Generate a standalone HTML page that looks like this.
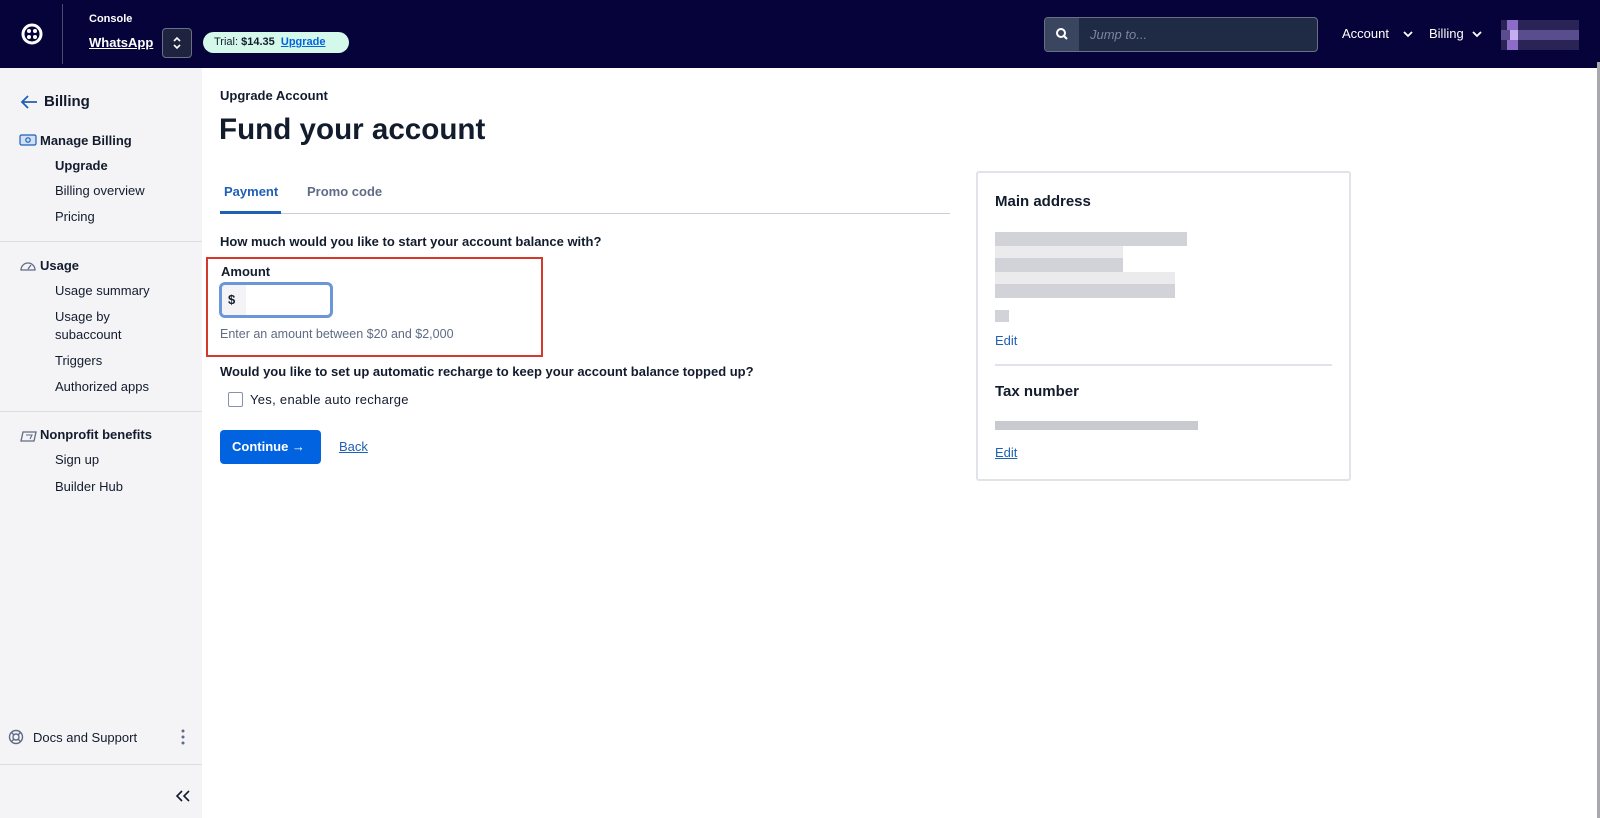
<!DOCTYPE html>
<html><head><meta charset="utf-8"><style>
*{box-sizing:border-box;margin:0;padding:0}
body{width:1600px;height:818px;overflow:hidden;font-family:"Liberation Sans",Arial,sans-serif;background:#fff;position:relative;color:#121c2d}
.hdr{position:absolute;left:0;top:0;width:1600px;height:68px;background:#06033a}
.side{position:absolute;left:0;top:68px;width:202px;height:750px;background:#f4f4f6}
.abs{position:absolute}
.s{font-size:13px;color:#121c2d}
.sb{font-size:13px;font-weight:bold;color:#121c2d}
.hr{position:absolute;left:0;width:202px;height:1px;background:#dcdde2}
.blk{position:absolute;background:#d2d3d8}
</style></head><body>
<div class="hdr">
 <svg class="abs" style="left:21px;top:23px" width="22" height="22" viewBox="0 0 22 22"><circle cx="11" cy="11" r="9" fill="none" stroke="#fff" stroke-width="3"/><circle cx="8" cy="8" r="2" fill="#fff"/><circle cx="14" cy="8" r="2" fill="#fff"/><circle cx="8" cy="14" r="2" fill="#fff"/><circle cx="14" cy="14" r="2" fill="#fff"/></svg>
 <div class="abs" style="left:62px;top:4px;width:1px;height:60px;background:#4b4a6e"></div>
 <div class="abs" style="left:89px;top:13px;color:#fff;font-size:11px;font-weight:bold">Console</div>
 <div class="abs" style="left:89px;top:35px;color:#fff;font-size:13px;font-weight:bold;text-decoration:underline">WhatsApp</div>
 <div class="abs" style="left:162px;top:28px;width:30px;height:30px;border:1px solid #6a6f86;border-radius:4px;background:#1e2440"><svg width="28" height="28" viewBox="0 0 28 28"><path d="M11 12l3-3 3 3M11 16l3 3 3-3" fill="none" stroke="#fff" stroke-width="1.6"/></svg></div>
 <div class="abs" style="left:203px;top:32px;width:146px;height:21px;border-radius:11px;background:#d4f8ea;font-size:11px;line-height:21px;padding-left:11px;color:#121c2d">Trial: <b>$14.35</b> &nbsp;<b style="color:#0263e0;text-decoration:underline">Upgrade</b></div>
 <div class="abs" style="left:1044px;top:17px;width:274px;height:35px;border:1px solid #6a6f86;border-radius:4px;background:#1f2b44"></div>
 <div class="abs" style="left:1045px;top:18px;width:34px;height:33px;background:#3a4560;border-radius:3px 0 0 3px"><svg width="34" height="33" viewBox="0 0 34 33"><circle cx="16" cy="15" r="4" fill="none" stroke="#fff" stroke-width="2"/><path d="M19 18l3 3" stroke="#fff" stroke-width="2"/></svg></div>
 <div class="abs" style="left:1090px;top:27px;font-size:13px;font-style:italic;color:#7b83a0">Jump to...</div>
 <div class="abs" style="left:1342px;top:26px;font-size:13px;color:#fff">Account</div>
 <svg class="abs" style="left:1403px;top:30px" width="10" height="8"><path d="M1 2l4 4 4-4" fill="none" stroke="#fff" stroke-width="1.8"/></svg>
 <div class="abs" style="left:1429px;top:26px;font-size:13px;color:#fff">Billing</div>
 <svg class="abs" style="left:1472px;top:30px" width="10" height="8"><path d="M1 2l4 4 4-4" fill="none" stroke="#fff" stroke-width="1.8"/></svg>
 <div class="abs" style="left:1501px;top:20px;width:78px;height:30px;background:#2a2456"></div>
 <div class="abs" style="left:1507px;top:20px;width:11px;height:30px;background:#8d6cc8"></div>
 <div class="abs" style="left:1501px;top:30px;width:78px;height:10px;background:#5a4d8e"></div>
 <div class="abs" style="left:1510px;top:30px;width:8px;height:10px;background:#c5aef0"></div>
</div>
<div class="abs" style="left:1597px;top:62px;width:3px;height:756px;background:#a9a9ad"></div>

<div class="side">
 <svg class="abs" style="left:20px;top:27px" width="18" height="14"><path d="M17 7H2M8 1L2 7l6 6" fill="none" stroke="#1f5fb5" stroke-width="1.8"/></svg>
 <div class="abs" style="left:44px;top:25px;font-size:15px;font-weight:bold">Billing</div>
 <svg class="abs" style="left:19px;top:66px" width="18" height="13"><rect x="1" y="1" width="16" height="10" rx="1.5" fill="#cfe0f7" stroke="#1f5fb5" stroke-width="1.2"/><circle cx="9" cy="6" r="2.2" fill="none" stroke="#1f5fb5" stroke-width="1.2"/></svg>
 <div class="abs sb" style="left:40px;top:65px">Manage Billing</div>
 <div class="abs sb" style="left:55px;top:90px">Upgrade</div>
 <div class="abs s" style="left:55px;top:115px">Billing overview</div>
 <div class="abs s" style="left:55px;top:141px">Pricing</div>
 <div class="hr" style="top:173px"></div>
 <svg class="abs" style="left:19px;top:191px" width="18" height="13"><path d="M2 11a7 7 0 1 1 14 0z" fill="none" stroke="#606b85" stroke-width="1.3"/><path d="M9 10l3-4" stroke="#606b85" stroke-width="1.3"/></svg>
 <div class="abs sb" style="left:40px;top:190px">Usage</div>
 <div class="abs s" style="left:55px;top:215px">Usage summary</div>
 <div class="abs s" style="left:55px;top:241px">Usage by</div>
 <div class="abs s" style="left:55px;top:259px">subaccount</div>
 <div class="abs s" style="left:55px;top:285px">Triggers</div>
 <div class="abs s" style="left:55px;top:311px">Authorized apps</div>
 <div class="hr" style="top:343px"></div>
 <svg class="abs" style="left:20px;top:362px" width="18" height="13"><path d="M3 2h13l-2 9H1z" fill="none" stroke="#606b85" stroke-width="1.3"/><path d="M6 5h6l-2 4" fill="none" stroke="#606b85" stroke-width="1.1"/></svg>
 <div class="abs sb" style="left:40px;top:359px">Nonprofit benefits</div>
 <div class="abs s" style="left:55px;top:384px">Sign up</div>
 <div class="abs s" style="left:55px;top:411px">Builder Hub</div>
 <svg class="abs" style="left:8px;top:661px" width="16" height="16"><circle cx="8" cy="8" r="6.5" fill="none" stroke="#606b85" stroke-width="1.4"/><circle cx="8" cy="8" r="3" fill="none" stroke="#606b85" stroke-width="1.4"/><path d="M3.5 3.5l2.4 2.4M12.5 3.5l-2.4 2.4M3.5 12.5l2.4-2.4M12.5 12.5l-2.4-2.4" stroke="#606b85" stroke-width="1.4"/></svg>
 <div class="abs s" style="left:33px;top:662px">Docs and Support</div>
 <svg class="abs" style="left:180px;top:660px" width="6" height="18"><circle cx="3" cy="3" r="1.5" fill="#606b85"/><circle cx="3" cy="9" r="1.5" fill="#606b85"/><circle cx="3" cy="15" r="1.5" fill="#606b85"/></svg>
 <div class="hr" style="top:696px"></div>
 <svg class="abs" style="left:175px;top:721px" width="16" height="14"><path d="M7 2L2 7l5 5M14 2L9 7l5 5" fill="none" stroke="#121c2d" stroke-width="1.6"/></svg>
</div>

<div class="abs" style="left:220px;top:88px;font-size:13px;font-weight:bold">Upgrade Account</div>
<div class="abs" style="left:219px;top:113px;font-size:29.6px;font-weight:bold">Fund your account</div>
<div class="abs" style="left:224px;top:184px;font-size:13px;font-weight:bold;color:#1f5fb5">Payment</div>
<div class="abs" style="left:307px;top:184px;font-size:13px;font-weight:bold;color:#606b85">Promo code</div>
<div class="abs" style="left:220px;top:213px;width:730px;height:1px;background:#cacdd8"></div>
<div class="abs" style="left:220px;top:211px;width:61px;height:3px;background:#1f5fb5"></div>
<div class="abs" style="left:220px;top:234px;font-size:13px;font-weight:bold">How much would you like to start your account balance with?</div>
<div class="abs" style="left:206px;top:257px;width:337px;height:100px;border:2px solid #d33a2c"></div>
<div class="abs" style="left:221px;top:264px;font-size:13px;font-weight:bold">Amount</div>
<div class="abs" style="left:219px;top:282px;width:114px;height:36px;border:3px solid #6b96d8;border-radius:6px;background:#fff;overflow:hidden"><div style="width:24px;height:100%;background:#f4f4f6;font-size:13px;font-weight:bold;line-height:30px;padding-left:6px">$</div></div>
<div class="abs" style="left:220px;top:327px;font-size:12.5px;color:#606b85">Enter an amount between $20 and $2,000</div>
<div class="abs" style="left:220px;top:364px;font-size:13px;font-weight:bold">Would you like to set up automatic recharge to keep your account balance topped up?</div>
<div class="abs" style="left:228px;top:392px;width:15px;height:15px;border:1px solid #8891aa;border-radius:2px;background:#fff"></div>
<div class="abs" style="left:250px;top:392px;font-size:13px;letter-spacing:.3px">Yes, enable auto recharge</div>
<div class="abs" style="left:220px;top:430px;width:101px;height:34px;background:#0263e0;border-radius:4px;color:#fff;font-size:13px;font-weight:bold;line-height:34px;padding-left:12px">Continue &rarr;</div>
<div class="abs" style="left:339px;top:439px;font-size:13px;color:#1f5fb5;text-decoration:underline">Back</div>

<div class="abs" style="left:976px;top:171px;width:375px;height:310px;border:2px solid #e1e3ea;border-radius:3px"></div>
<div class="abs" style="left:995px;top:193px;font-size:15px;font-weight:bold">Main address</div>
<div class="blk" style="left:995px;top:232px;width:192px;height:14px"></div>
<div class="blk" style="left:995px;top:246px;width:128px;height:12px;background:#ebebee"></div>
<div class="blk" style="left:995px;top:258px;width:128px;height:14px"></div>
<div class="blk" style="left:995px;top:272px;width:180px;height:12px;background:#ebebee"></div>
<div class="blk" style="left:995px;top:284px;width:180px;height:14px"></div>
<div class="blk" style="left:995px;top:310px;width:14px;height:12px"></div>
<div class="abs" style="left:995px;top:333px;font-size:13px;color:#1f5fb5">Edit</div>
<div class="abs" style="left:995px;top:364px;width:337px;height:2px;background:#e1e3ea"></div>
<div class="abs" style="left:995px;top:383px;font-size:15px;font-weight:bold">Tax number</div>
<div class="blk" style="left:995px;top:421px;width:203px;height:9px;background:#c9cad0"></div>
<div class="abs" style="left:995px;top:445px;font-size:13px;color:#1f5fb5;text-decoration:underline">Edit</div>
</body></html>
